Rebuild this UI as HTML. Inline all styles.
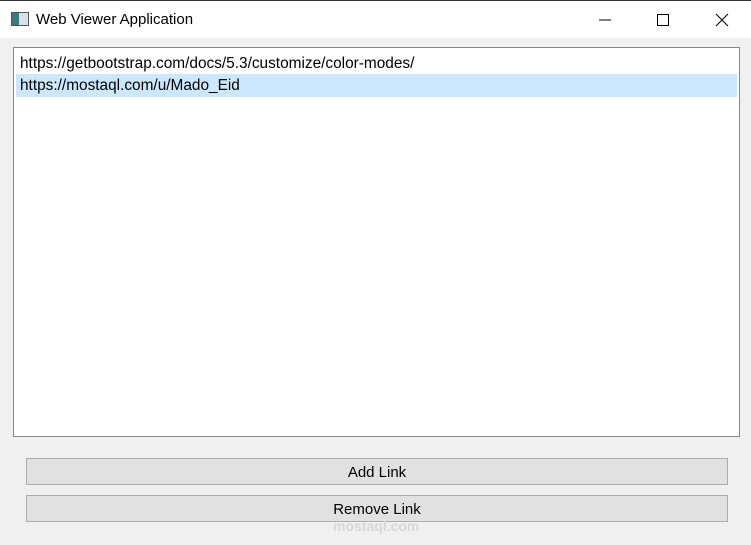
<!DOCTYPE html>
<html><head><style>
body{margin:0;width:751px;height:545px;background:#f0f0f0;font-family:"Liberation Sans",sans-serif;position:relative;overflow:hidden;color:#000}
.top{position:absolute;left:0;top:0;width:751px;height:1px;background:#333}
.title{position:absolute;left:0;top:1px;width:751px;height:37px;background:#fff}
.title span{position:absolute;left:36px;top:10px;font-size:15px}
.ico{position:absolute;left:11px;top:11px;width:16px;height:12px;border:1px solid #555;background:linear-gradient(90deg,#3a7a7a 0 45%,#dde 45%)}
.list{position:absolute;left:13px;top:47px;width:725px;height:388px;background:#fff;border:1px solid #828790}
.row{position:absolute;left:2px;width:721px;height:23px;font-size:15.4px;line-height:23px;padding-left:4px;box-sizing:border-box}
.btn{position:absolute;left:26px;width:702px;height:27px;background:#e1e1e1;border:1px solid #adadad;box-sizing:border-box;text-align:center;font-size:15px;line-height:28px}
</style></head><body>
<div class="top"></div>
<div class="title"><div class="ico"></div><span>Web Viewer Application</span>
<svg style="position:absolute;left:590px;top:10px" width="150" height="20"><line x1="9" y1="9" x2="21" y2="9" stroke="#000"/><rect x="67.5" y="3.5" width="11" height="11" fill="none" stroke="#000"/><path d="M126 3l12 12M138 3l-12 12" stroke="#000"/></svg>
</div>
<div class="list">
<div class="row" style="top:4px">https://getbootstrap.com/docs/5.3/customize/color-modes/</div>
<div class="row" style="top:26px;background:#cce8ff">https://mostaql.com/u/Mado_Eid</div>
</div>
<div class="btn" style="top:458px">Add Link</div>
<div class="btn" style="top:495px">Remove Link</div>
<div style="position:absolute;left:333px;top:518px;font-size:14px;font-weight:bold;color:#d8d8d8">mostaql.com</div>
</body></html>
